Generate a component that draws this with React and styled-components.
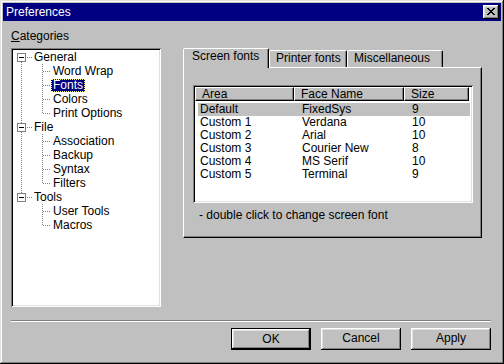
import React from "react";
import styled, { createGlobalStyle } from "styled-components";

const Global = createGlobalStyle`
  html, body { margin: 0; padding: 0; background: #c0c0c0; }
  body { font-family: "Liberation Sans", Arial, sans-serif; font-size: 12px; }
`;

const Window = styled.div`
  width: 504px;
  height: 364px;
  box-sizing: border-box;
  padding: 3px;
  background: #c0c0c0;
  box-shadow: inset -1px -1px #000, inset 1px 1px #dfdfdf, inset -2px -2px #808080, inset 2px 2px #fff;
  display: flex;
  flex-direction: column;
  font-family: "Liberation Sans", Arial, sans-serif;
  font-size: 12px;
  color: #000;
`;

const TitleBar = styled.div`
  height: 18px;
  background: #000080;
  color: #fff;
  display: flex;
  align-items: center;
  justify-content: space-between;
  padding: 0 2px 0 3px;
  line-height: 18px;
`;

const TitleText = styled.span`
  font-size: 12px;
`;

const CloseButton = styled.div`
  width: 16px;
  height: 14px;
  box-sizing: border-box;
  background: #c0c0c0;
  box-shadow: inset -1px -1px #000, inset 1px 1px #fff, inset -2px -2px #808080, inset 2px 2px #dfdfdf;
  display: flex;
  align-items: center;
  justify-content: center;
  padding: 0 1px 1px 0;
`;

const Body = styled.div`
  flex: 1;
  display: flex;
  flex-direction: column;
  padding: 8px 10px 0 8px;
`;

const TopRow = styled.div`
  display: flex;
  align-items: flex-start;
`;

const LeftCol = styled.div`
  width: 150px;
  display: flex;
  flex-direction: column;
`;

const Label = styled.div`
  height: 14px;
  line-height: 14px;
  margin-bottom: 5px;
`;

const Sunken = styled.div`
  box-sizing: border-box;
  background: #fff;
  padding: 2px;
  box-shadow: inset 1px 1px #808080, inset -1px -1px #fff, inset 2px 2px #000, inset -2px -2px #dfdfdf;
`;

const TreeBox = styled(Sunken)`
  height: 259px;
  display: flex;
  flex-direction: column;
`;

const TreeRow = styled.div`
  height: 14px;
  display: flex;
  align-items: center;
`;

const TreeLabel = styled.span`
  height: 13px;
  line-height: 13px;
  padding: 0 2px;
  box-sizing: border-box;
  background: ${(p) => (p.$selected ? "#000080" : "transparent")};
  color: ${(p) => (p.$selected ? "#fff" : "#000")};
  outline: ${(p) => (p.$selected ? "1px dotted #ffff7f" : "none")};
  outline-offset: -1px;
  white-space: nowrap;
`;

const RightCol = styled.div`
  margin-left: 22px;
  margin-top: 19px;
  width: 299px;
  display: flex;
  flex-direction: column;
`;

const TabStrip = styled.div`
  height: 19px;
  display: flex;
  align-items: flex-start;
  position: relative;
  z-index: 1;
`;

const Tab = styled.div`
  box-sizing: border-box;
  width: ${(p) => p.$w}px;
  height: ${(p) => (p.$active ? 20 : 17)}px;
  margin-top: ${(p) => (p.$active ? 0 : 2)}px;
  padding-left: ${(p) => (p.$active ? 8 : 6)}px;
  line-height: 14px;
  background: #c0c0c0;
  border-style: solid;
  border-width: 1px 1px 0 1px;
  border-color: #fff #000 transparent #fff;
  border-radius: 2px 2px 0 0;
  box-shadow: inset -1px 0 #808080;
  white-space: nowrap;
`;

const Panel = styled.div`
  box-sizing: border-box;
  height: 171px;
  border-style: solid;
  border-width: 1px;
  border-color: #fff #000 #000 #fff;
  box-shadow: inset -1px -1px #808080;
  padding: 17px 0 0 9px;
  display: flex;
  flex-direction: column;
`;

const ListView = styled(Sunken)`
  width: 280px;
  height: 118px;
`;

const HeaderRow = styled.div`
  display: grid;
  grid-template-columns: 99px 110px 65px;
  height: 14px;
`;

const HeaderCell = styled.div`
  box-sizing: border-box;
  height: 14px;
  line-height: 13px;
  padding-left: 6px;
  background: #c0c0c0;
  border-style: solid;
  border-width: 1px;
  border-color: #fff #000 #000 #fff;
  box-shadow: inset -1px -1px #808080;
  white-space: nowrap;
`;

const Rows = styled.div`
  margin: 2px 0 0 3px;
  width: 272px;
  display: flex;
  flex-direction: column;
`;

const DataRow = styled.div`
  display: grid;
  grid-template-columns: 102px 110px 1fr;
  height: 13px;
  line-height: 13px;
  background: ${(p) => (p.$selected ? "#c0c0c0" : "transparent")};
`;

const DataCell = styled.span`
  padding-left: 2px;
  white-space: nowrap;
`;

const Hint = styled.div`
  margin: 5px 0 0 6px;
  line-height: 14px;
  height: 14px;
`;

const Separator = styled.div`
  margin-top: 13px;
  height: 2px;
  box-sizing: border-box;
  border-top: 1px solid #808080;
  border-bottom: 1px solid #fff;
`;

const ButtonRow = styled.div`
  margin-top: 6px;
  display: flex;
  justify-content: flex-end;
  gap: 10px;
`;

const Button = styled.div`
  box-sizing: border-box;
  width: 80px;
  height: 22px;
  line-height: ${(p) => (p.$default ? 20 : 21)}px;
  text-align: center;
  background: #c0c0c0;
  border: ${(p) => (p.$default ? "1px solid #000" : "none")};
  box-shadow: inset -1px -1px #000, inset 1px 1px #fff, inset -2px -2px #808080, inset 2px 2px #dfdfdf;
`;

const CloseGlyph = () => (
  <svg width="8" height="7" viewBox="0 0 8 7" shapeRendering="crispEdges">
    <path
      fill="#000"
      d="M0 0h2v1H0zM6 0h2v1H6zM1 1h2v1H1zM5 1h2v1H5zM2 2h4v1H2zM3 3h2v1H3zM2 4h4v1H2zM1 5h2v1H1zM5 5h2v1H5zM0 6h2v1H0zM6 6h2v1H6z"
    />
  </svg>
);

const Dots = ({ x1, x2, y, vertical, y1, y2, x }) => {
  const out = [];
  if (vertical) {
    for (let i = y1; i <= y2; i++) if (i % 2 === 0) out.push(<rect key={i} x={x} y={i} width="1" height="1" />);
  } else {
    for (let i = x1; i <= x2; i++) if (i % 2 === 0) out.push(<rect key={i} x={i} y={y} width="1" height="1" />);
  }
  return <>{out}</>;
};

const RootConnector = ({ above, below }) => (
  <svg width="19" height="14" shapeRendering="crispEdges" style={{ flex: "none" }}>
    <g fill="#808080">
      {above && <Dots vertical x={8} y1={0} y2={2} />}
      {below && <Dots vertical x={8} y1={12} y2={13} />}
      <Dots x1={14} x2={18} y={7} />
    </g>
    <rect x="4.5" y="3.5" width="8" height="8" fill="#fff" stroke="#808080" />
    <rect x="6" y="7" width="5" height="1" fill="#000" />
  </svg>
);

const ChildConnector = ({ rootLine, last }) => (
  <svg width="38" height="14" shapeRendering="crispEdges" style={{ flex: "none" }}>
    <g fill="#808080">
      {rootLine && <Dots vertical x={8} y1={0} y2={13} />}
      <Dots vertical x={29} y1={0} y2={last ? 7 : 13} />
      <Dots x1={30} x2={37} y={7} />
    </g>
  </svg>
);

const tree = [
  { label: "General", children: ["Word Wrap", "Fonts", "Colors", "Print Options"] },
  { label: "File", children: ["Association", "Backup", "Syntax", "Filters"] },
  { label: "Tools", children: ["User Tools", "Macros"] },
];

const fonts = [
  ["Default", "FixedSys", "9"],
  ["Custom 1", "Verdana", "10"],
  ["Custom 2", "Arial", "10"],
  ["Custom 3", "Courier New", "8"],
  ["Custom 4", "MS Serif", "10"],
  ["Custom 5", "Terminal", "9"],
];

export default function App() {
  return (
    <>
      <Global />
      <Window>
        <TitleBar>
          <TitleText>Preferences</TitleText>
          <CloseButton>
            <CloseGlyph />
          </CloseButton>
        </TitleBar>
        <Body>
          <TopRow>
            <LeftCol>
              <Label>
                <u>C</u>ategories
              </Label>
              <TreeBox>
                {tree.map((node, ri) => (
                  <React.Fragment key={node.label}>
                    <TreeRow>
                      <RootConnector above={ri > 0} below={ri < tree.length - 1} />
                      <TreeLabel>{node.label}</TreeLabel>
                    </TreeRow>
                    {node.children.map((c, ci) => (
                      <TreeRow key={c}>
                        <ChildConnector rootLine={ri < tree.length - 1} last={ci === node.children.length - 1} />
                        <TreeLabel $selected={c === "Fonts"}>{c}</TreeLabel>
                      </TreeRow>
                    ))}
                  </React.Fragment>
                ))}
              </TreeBox>
            </LeftCol>
            <RightCol>
              <TabStrip>
                <Tab $active $w={86}>Screen fonts</Tab>
                <Tab $w={78}>Printer fonts</Tab>
                <Tab $w={96}>Miscellaneous</Tab>
              </TabStrip>
              <Panel>
                <ListView>
                  <HeaderRow>
                    <HeaderCell>Area</HeaderCell>
                    <HeaderCell>Face Name</HeaderCell>
                    <HeaderCell>Size</HeaderCell>
                  </HeaderRow>
                  <Rows>
                    {fonts.map((f, i) => (
                      <DataRow key={f[0]} $selected={i === 0}>
                        <DataCell>{f[0]}</DataCell>
                        <DataCell>{f[1]}</DataCell>
                        <DataCell>{f[2]}</DataCell>
                      </DataRow>
                    ))}
                  </Rows>
                </ListView>
                <Hint>- double click to change screen font</Hint>
              </Panel>
            </RightCol>
          </TopRow>
          <Separator />
          <ButtonRow>
            <Button $default>OK</Button>
            <Button>Cancel</Button>
            <Button>Apply</Button>
          </ButtonRow>
        </Body>
      </Window>
    </>
  );
}
